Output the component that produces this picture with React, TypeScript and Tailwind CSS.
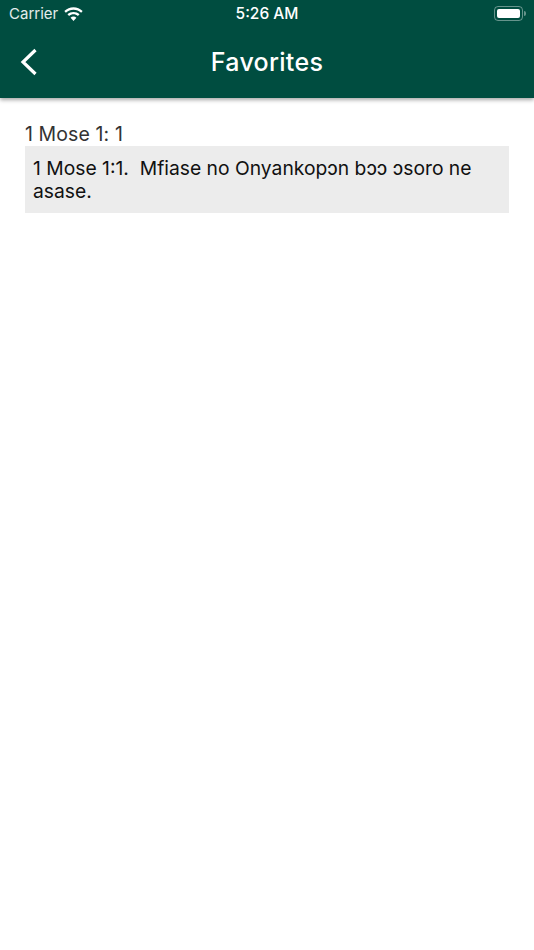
function WifiIcon() {
  return (
    <svg width="19" height="14" viewBox="1.5 0 17 13" fill="white" className="-mt-[1px]">
      <path d="M10 2.6c2.7 0 5.2 1 7.1 2.8l1.4-1.6C16.2 1.6 13.2.3 10 .3S3.800 1.600 1.500 3.800l1.400 1.600C4.800 3.600 7.300 2.600 10 2.600z" />
      <path d="M10 6.800c1.500 0 3 .6 4.100 1.600l1.500-1.600C14.100 5.400 12.100 4.600 10 4.600s-4.100.8-5.600 2.200l1.500 1.600c1.100-1 2.600-1.600 4.100-1.600z" />
      <path d="M10 8.900c-1 0-2 .4-2.700 1L10 13l2.700-3.100c-.7-.6-1.700-1-2.700-1z" />
    </svg>
  );
}

function BackIcon() {
  return (
    <svg width="18" height="28" viewBox="0 0 18 28" fill="none" stroke="white" strokeWidth="3.200" className="absolute left-[20px] top-[20px]">
      <path d="M15.500 2 3 14l12.500 12" />
    </svg>
  );
}

function Battery() {
  return (
    <div className="flex items-center -mt-[1px]">
      <div className="w-[29px] h-[14.500px] rounded-[4px] border border-white/40 p-[2px]">
        <div className="w-full h-full rounded-[2px] bg-white" />
      </div>
      <div className="w-[1.500px] h-[5px] ml-[1px] rounded-r-sm bg-white/40" />
    </div>
  );
}

export default function App() {
  return (
    <div className="min-h-[950px] bg-white font-['Inter',sans-serif]">
      <header className="h-[98px] bg-[#004d40] text-white shadow-[0_2px_4px_rgba(0,0,0,0.35)]">
        <div className="relative h-[28px] flex items-center justify-between pl-[9px] pr-[8.500px]">
          <div className="flex items-center gap-[6px]">
            <span className="text-[15px] leading-[28px] text-white/90">Carrier</span>
            <WifiIcon />
          </div>
          <span className="absolute left-0 right-0 text-center text-[15.500px] font-medium leading-[28px]">5:26 AM</span>
          <Battery />
        </div>
        <div className="relative h-[70px] flex items-center justify-center">
          <BackIcon />
          <h1 className="text-[25px] font-medium tracking-[0.3px]">Favorites</h1>
        </div>
      </header>
      <main className="px-[25px] pt-[25px]">
        <div className="text-[19.500px] tracking-[0.1px] leading-[23px] text-[#333333]">1 Mose 1: 1</div>
        <div className="bg-[#ececec] px-[8px] py-[10.500px] text-[19.300px] leading-[23px] text-[#111111]">
          1 Mose 1:1.&nbsp; Mfiase no Onyankopɔn bɔɔ ɔsoro ne asase.
        </div>
      </main>
    </div>
  );
}
